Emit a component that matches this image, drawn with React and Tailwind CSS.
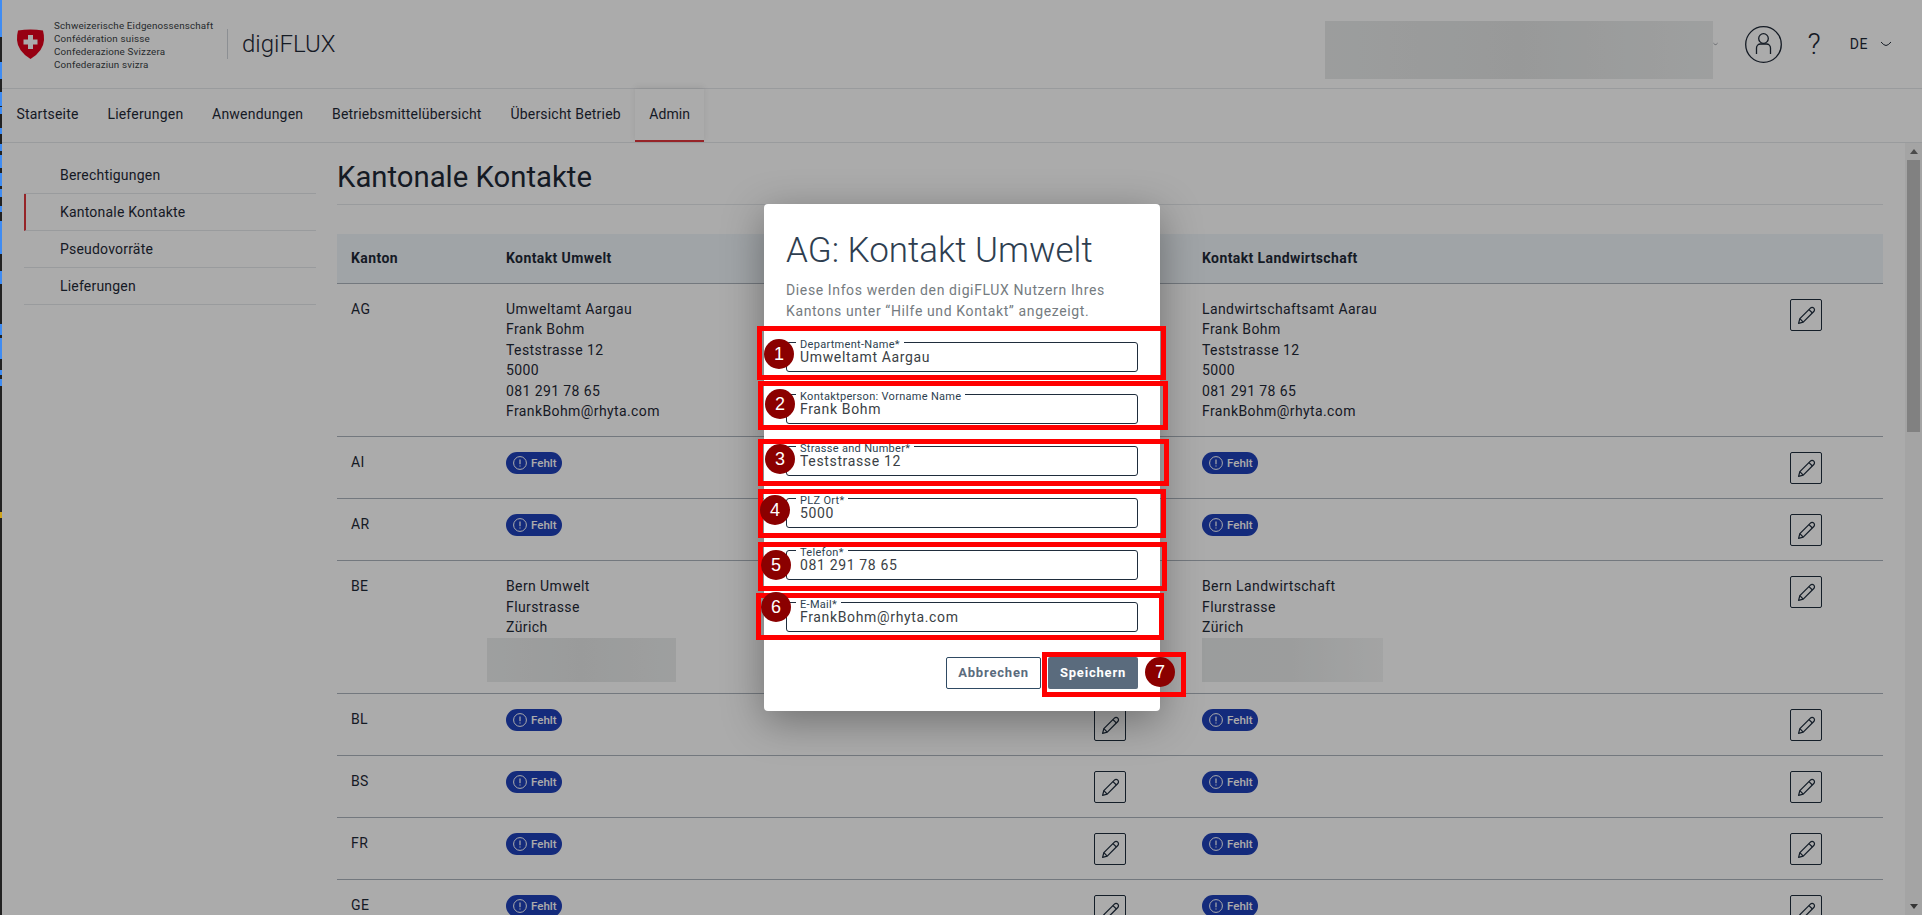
const stripSegments = [
  ["b", "h-[37px]"], ["d", "h-[25px]"], ["b", "h-[17px]"], ["d", "h-[13px]"], ["b", "h-[14px]"], ["d", "h-[1px]"],
  ["b", "h-[7px]"], ["d", "h-[14px]"], ["b", "h-[6px]"], ["d", "h-[10px]"], ["b", "h-[7px]"], ["d", "h-[4px]"],
  ["b", "h-[13px]"], ["d", "h-[5px]"], ["b", "h-[13px]"], ["d", "h-[3px]"], ["b", "h-[8px]"], ["d", "h-[9px]"],
  ["b", "h-[6px]"], ["d", "h-[9px]"], ["b", "h-[33px]"], ["d", "h-[17px]"], ["b", "h-[13px]"], ["d", "h-[40px]"],
  ["b", "h-[11px]"], ["d", "h-[3px]"], ["b", "h-[21px]"], ["d", "h-[11px]"], ["b", "h-[5px]"], ["d", "h-[4px]"],
  ["b", "h-[7px]"], ["d", "h-[127px]"], ["y", "h-[6px]"], ["d", "h-[397px]"],
];

const stripColors = { b: "bg-[#3f8cf3]", d: "bg-[#222222]", y: "bg-[#d0a51c]" };

const rows = [
  {
    code: "AG",
    env: ["Umweltamt Aargau", "Frank Bohm", "Teststrasse 12", "5000", "081 291 78 65", "FrankBohm@rhyta.com"],
    agr: ["Landwirtschaftsamt Aarau", "Frank Bohm", "Teststrasse 12", "5000", "081 291 78 65", "FrankBohm@rhyta.com"],
  },
  { code: "AI" },
  { code: "AR" },
  {
    code: "BE",
    env: ["Bern Umwelt", "Flurstrasse", "Zürich"],
    agr: ["Bern Landwirtschaft", "Flurstrasse", "Zürich"],
    blurred: true,
  },
  { code: "BL" },
  { code: "BS" },
  { code: "FR" },
  { code: "GE" },
];

const fields = [
  { label: "Department-Name*", value: "Umweltamt Aargau" },
  { label: "Kontaktperson: Vorname Name", value: "Frank Bohm" },
  { label: "Strasse and Number*", value: "Teststrasse 12" },
  { label: "PLZ Ort*", value: "5000" },
  { label: "Telefon*", value: "081 291 78 65" },
  { label: "E-Mail*", value: "FrankBohm@rhyta.com" },
];

const redBoxes = [
  "left-[757px] top-[326px] w-[409px] h-[54px]",
  "left-[758px] top-[381px] w-[410px] h-[49px]",
  "left-[758px] top-[439px] w-[411px] h-[47px]",
  "left-[758px] top-[489px] w-[408px] h-[49px]",
  "left-[758px] top-[542px] w-[409px] h-[49px]",
  "left-[756px] top-[593px] w-[408px] h-[47px]",
  "left-[1042px] top-[652px] w-[144px] h-[45px]",
];

const markers = [
  { n: 1, pos: "left-[764px] top-[339px]" },
  { n: 2, pos: "left-[765px] top-[389px]" },
  { n: 3, pos: "left-[765px] top-[444px]" },
  { n: 4, pos: "left-[760px] top-[495px]" },
  { n: 5, pos: "left-[761px] top-[550px]" },
  { n: 6, pos: "left-[761px] top-[592px]" },
  { n: 7, pos: "left-[1145px] top-[657px]" },
];

const navItems = ["Startseite", "Lieferungen", "Anwendungen", "Betriebsmittelübersicht", "Übersicht Betrieb"];
const sideItems = ["Berechtigungen", "Kantonale Kontakte", "Pseudovorräte", "Lieferungen"];

function Shield() {
  return (
    <svg viewBox="0 0 27 30" className="h-[30px] w-[27px] shrink-0">
      <path d="M1 1.5 Q13.5 -0.5 26 1.5 Q27 5 27 11 Q26.5 22 13.5 30 Q0.5 22 0 11 Q0 5 1 1.5Z" fill="#e1001b" />
      <path d="M11 6h5v4.5h4.5v5h-4.5v4.5h-5v-4.5h-4.5v-5h4.5z" fill="#ffffff" />
    </svg>
  );
}

function Chevron({ className }) {
  return (
    <svg viewBox="0 0 12 6" className={className} fill="none" stroke="#1f2937" strokeWidth="1">
      <path d="M1 1 Q4 4.5 6 4.5 Q8 4.5 11 1" />
    </svg>
  );
}

function UserIcon() {
  return (
    <svg viewBox="0 0 37 37" className="h-[37px] w-[37px]" fill="none" stroke="#1f2937" strokeWidth="1.3">
      <circle cx="18.5" cy="18.5" r="17.8" />
      <circle cx="18.5" cy="12.5" r="4.8" />
      <path d="M11.5 28 V22 a4 4 0 0 1 4-4 h6 a4 4 0 0 1 4 4 V28" />
    </svg>
  );
}

function EditButton() {
  return (
    <button className="flex h-[32px] w-[32px] shrink-0 items-center justify-center rounded-[2px] border border-[#1f2d3d]">
      <svg viewBox="0 0 18 18" className="h-[19px] w-[19px]" fill="none" stroke="#1f2d3d" strokeWidth="1.2" strokeLinejoin="round">
        <path d="M1.5 16.5 L2.7 12 L12.7 2 a2 2 0 0 1 3.2 3.2 L5.9 15.3 Z" />
        <path d="M11.3 3.4 L14.6 6.6" />
        <path d="M2.7 12 L5.9 15.3" />
      </svg>
    </button>
  );
}

function MissingBadge() {
  return (
    <span className="inline-flex h-[22px] w-[56px] items-center gap-[4px] rounded-full bg-[#1f40ba] pl-[7px] text-[11.5px] font-medium tracking-normal text-white">
      <svg viewBox="0 0 14 14" className="h-[14px] w-[14px] shrink-0" fill="none" stroke="#ffffff" strokeWidth="1">
        <circle cx="7" cy="7" r="6.4" />
        <path d="M7 3.5 V8.2 M7 9.6 V10.6" strokeWidth="1.2" />
      </svg>
      Fehlt
    </span>
  );
}

function ContactCell({ lines, blur }) {
  return (
    <div className="flex">
      <div className="w-[602px] pb-[15px] pl-[14px]">
        {lines ? lines.map((line) => <div key={line}>{line}</div>) : <MissingBadge />}
        {blur}
      </div>
      <EditButton />
    </div>
  );
}

function Field({ label, value }) {
  return (
    <div className="relative h-[30px] rounded-[3px] border border-[#1f2d3d]">
      <input
        readOnly
        value={value}
        className="mt-[5px] block h-[18px] w-full pl-[13px] text-[14px] leading-[18px] tracking-[0.65px] text-[#3b3f45] outline-none"
      />
      <span className="absolute -top-[3px] left-[9px] h-[9px] bg-white px-[4px] text-[11px] leading-[9px] tracking-[0.3px] text-[#2d3f50]">
        {label}
      </span>
    </div>
  );
}

export default function App() {
  return (
    <div className="relative flex h-screen overflow-hidden bg-white font-['Roboto',sans-serif] text-[14px] text-[#1f2937]">
      {/* strip of the window behind the browser */}
      <div className="flex w-[2px] shrink-0 flex-col">
        {stripSegments.map(([c, h], i) => (
          <div key={i} className={`${stripColors[c]} ${h}`} />
        ))}
      </div>

      <div className="relative flex min-w-0 flex-1 flex-col">
        <header className="flex h-[89px] shrink-0 items-center border-b border-[#e5e7eb] pl-[15px] pr-[30px]">
          <Shield />
          <div className="ml-[10px] mt-[2px] w-[173px] text-[9.8px] leading-[13px] tracking-[0.18px] text-[#3a3f45]">
            <div>Schweizerische Eidgenossenschaft</div>
            <div>Confédération suisse</div>
            <div>Confederazione Svizzera</div>
            <div>Confederaziun svizra</div>
          </div>
          <div className="h-[30px] w-px bg-[#d1d5db]" />
          <div className="ml-[14px] text-[24px] font-light text-[#1f2937]">digiFLUX</div>

          <div className="ml-auto flex items-center">
            <div className="mt-[12px] h-[58px] w-[388px] bg-gradient-to-r from-[#e9ebeb] via-[#e3e5e5] to-[#eceeee]" />
            <Chevron className="h-[6px] w-[5px]" />
            <div className="ml-[27px]">
              <UserIcon />
            </div>
            <div className="ml-[25px] text-[29px] font-light leading-none text-[#1f2937]">?</div>
            <div className="ml-[29px] text-[14px] tracking-[0.6px]">DE</div>
            <Chevron className="ml-[12px] h-[6px] w-[12px]" />
          </div>
        </header>

        <nav className="flex h-[54px] shrink-0 border-b border-[#e5e7eb]">
          {navItems.map((item) => (
            <a key={item} className="flex items-center px-[14.4px] pb-[2px] tracking-[0.2px]">
              {item}
            </a>
          ))}
          <a className="flex w-[69px] items-center justify-center border-b-2 border-[#e0363c] tracking-[0.1px] shadow-[0_-2px_6px_rgba(0,0,0,0.08)]">
            Admin
          </a>
        </nav>

        <div className="flex min-h-0 flex-1">
          <aside className="ml-[22px] mt-[14px] w-[292px] shrink-0">
            {sideItems.map((item) =>
              item === "Kantonale Kontakte" ? (
                <div key={item} className="flex h-[37px] items-center border-b border-l-2 border-b-[#e5e7eb] border-l-[#e0363c] pl-[34px] tracking-[0.2px]">
                  {item}
                </div>
              ) : (
                <div key={item} className="flex h-[37px] items-center border-b border-[#e5e7eb] pl-[36px] tracking-[0.2px]">
                  {item}
                </div>
              )
            )}
          </aside>

          <main className="ml-[21px] min-w-0 flex-1 pr-[22px] leading-[20.4px] tracking-[0.4px]">
            <h1 className="h-[62px] border-b border-[#e5e7eb] pt-[17px] text-[29.3px] font-normal leading-[34px] tracking-normal text-[#1f2937]">
              Kantonale Kontakte
            </h1>
            <div className="mt-[29px] grid h-[50px] grid-cols-[155px_696px_695px] items-center border-b border-[#acb4bd] bg-[#eff5f9] font-bold">
              <div className="pl-[14px]">Kanton</div>
              <div className="pl-[14px]">Kontakt Umwelt</div>
              <div className="pl-[14px]">Kontakt Landwirtschaft</div>
            </div>
            {rows.map((row) => (
              <div key={row.code} className="grid min-h-[62px] grid-cols-[155px_696px_695px] border-b border-[#acb4bd] pt-[15px]">
                <div className="pl-[14px]">{row.code}</div>
                <ContactCell
                  lines={row.env}
                  blur={row.blurred && <div className="-mb-[3.6px] -ml-[19px] h-[44px] w-[189px] bg-gradient-to-r from-[#eceeee] via-[#e6e8e8] to-[#eceeee]" />}
                />
                <ContactCell
                  lines={row.agr}
                  blur={row.blurred && <div className="-mb-[3.6px] h-[44px] w-[181px] bg-gradient-to-r from-[#e8eaea] via-[#e9ebeb] to-[#f4f5f5]" />}
                />
              </div>
            ))}
          </main>

          <div className="flex w-[17px] shrink-0 flex-col items-center bg-[#f5f5f5]">
            <div className="flex h-[17px] items-center justify-center">
              <div className="h-0 w-0 border-x-[4px] border-b-[5px] border-x-transparent border-b-[#707070]" />
            </div>
            <div className="h-[272px] w-[13px] bg-[#c1c1c1]" />
            <div className="flex-1" />
            <div className="flex h-[17px] items-center justify-center">
              <div className="h-0 w-0 border-x-[4px] border-t-[5px] border-x-transparent border-t-[#505050]" />
            </div>
          </div>
        </div>

        {/* modal */}
        <div className="absolute inset-0 flex items-center justify-center bg-black/33">
          <div className="w-[396px] rounded-[4px] bg-white px-[22px] pb-[22px] pt-[25px] shadow-[0_10px_40px_rgba(0,0,0,0.35)]">
            <h2 className="text-[35px] font-light leading-[44px] text-[#2e3e50]">AG: Kontakt Umwelt</h2>
            <p className="mt-[7px] text-[14px] leading-[21px] tracking-[0.62px] text-[#757b80]">
              Diese Infos werden den digiFLUX Nutzern Ihres Kantons unter “Hilfe und Kontakt” angezeigt.
            </p>
            <div className="mt-[20px] flex flex-col gap-[22px]">
              {fields.map((f) => (
                <Field key={f.label} label={f.label} value={f.value} />
              ))}
            </div>
            <div className="mt-[25px] flex justify-end gap-[7px]">
              <button className="h-[32px] w-[95px] rounded-[2px] border border-[#2f4a63] text-[13px] font-bold tracking-[0.8px] text-[#5a6b7d]">
                Abbrechen
              </button>
              <button className="h-[32px] w-[90px] rounded-[2px] bg-[#5a6b7d] text-[13px] font-bold tracking-[0.8px] text-white">
                Speichern
              </button>
            </div>
          </div>
        </div>
      </div>

      {/* annotations drawn on top of the screenshot */}
      {redBoxes.map((pos) => (
        <div key={pos} className={`absolute border-[5px] border-[#ff0000] ${pos}`} />
      ))}
      {markers.map((m) => (
        <div
          key={m.n}
          className={`absolute flex h-[30px] w-[30px] items-center justify-center rounded-full bg-[#8b0000] font-['Liberation_Sans',sans-serif] text-[18px] text-white ${m.pos}`}
        >
          {m.n}
        </div>
      ))}
    </div>
  );
}
